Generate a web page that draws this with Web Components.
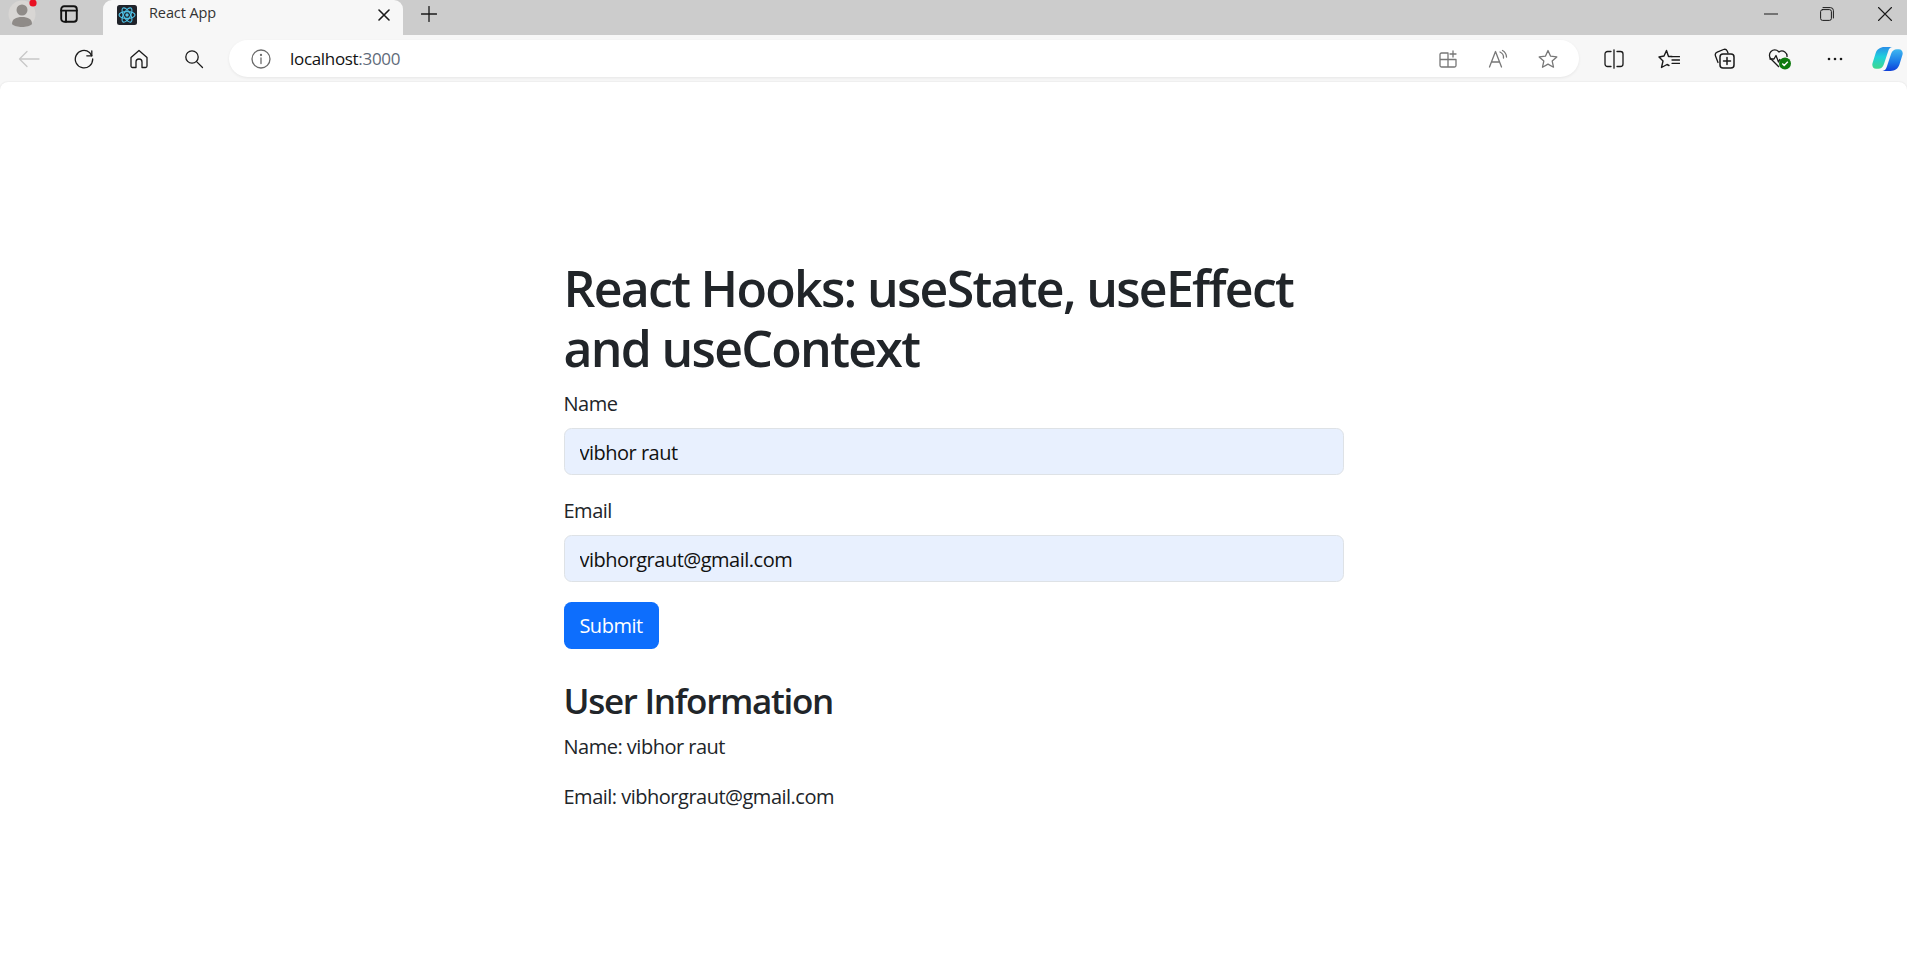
<!DOCTYPE html>
<html><head><meta charset="utf-8"><style>
html,body{margin:0;height:100%;background:#f7f7f7;overflow:hidden}
body{display:flex;flex-direction:column;height:978px}
</style></head><body>
<browser-tabstrip></browser-tabstrip>
<browser-toolbar></browser-toolbar>
<page-view>
  <hooks-form></hooks-form>
</page-view>
<script>
const UI='"Open Sans","Noto Sans",sans-serif';
const ic=(w,h,body,vb)=>`<svg width="${w}" height="${h}" viewBox="${vb||`0 0 ${w} ${h}`}" fill="none" stroke="currentColor" stroke-width="1.3" stroke-linecap="round" stroke-linejoin="round">${body}</svg>`;
const reactLogo=`<svg width="20" height="20" viewBox="0 0 20 20"><rect width="20" height="20" rx="2.5" fill="#20232a"/><g fill="none" stroke="#4fc3e8" stroke-width="1.1"><ellipse cx="10" cy="10" rx="8" ry="3.4"/><ellipse cx="10" cy="10" rx="8" ry="3.4" transform="rotate(60 10 10)"/><ellipse cx="10" cy="10" rx="8" ry="3.4" transform="rotate(120 10 10)"/></g><circle cx="10" cy="10" r="1.7" fill="#4fc3e8"/></svg>`;
class BrowserTabstrip extends HTMLElement{constructor(){super();this.attachShadow({mode:'open'}).innerHTML=`<style>
:host{display:flex;height:35px;background:#cccccc;flex:none;color:#1a1a1a;font:14.5px ${UI}}
.b{display:flex;align-items:center;justify-content:center;height:27px;flex:none}
.tab{width:300px;height:35px;background:#f7f7f7;border-radius:9px 9px 0 0;display:flex;align-items:center;box-sizing:border-box;padding:0 0 6px 14px;margin-left:9px;flex:none}
.t{margin:0 0 4px 12px;flex:1;letter-spacing:-.1px;color:#333}
.x{width:38px;display:flex;justify-content:center}
.sp{flex:1}
</style>
<div class="b" style="width:44px"><svg width="30" height="27" viewBox="7 0 30 27"><circle cx="22" cy="14" r="13.5" fill="#d8d6d4"/><circle cx="22" cy="10" r="5.5" fill="#8f8b88"/><path d="M12 24c0-5 4-7 10-7s10 2 10 7c-3 4-17 4-20 0z" fill="#8f8b88"/><circle cx="33" cy="3" r="3.6" fill="#e81123"/></svg></div>
<div class="b" style="width:50px;color:#111">${ic(18,18,'<rect x="1.2" y="1.2" width="15.6" height="15.6" rx="3" stroke-width="1.9"/><path d="M1.2 5.6H16.8M6 5.6V16.8" stroke-width="1.9"/>')}</div>
<div class="tab">${reactLogo}<span class="t">React App</span><span class="x">${ic(12,12,'<path d="M1 1L11 11M11 1L1 11" stroke-width="1.6"/>')}</span></div>
<div class="b" style="width:52px">${ic(16,16,'<path d="M8 0.5V15.5M0.5 8H15.5"/>')}</div>
<div class="sp"></div>
<div class="b" style="width:56px">${ic(14,2,'<path d="M0 1H14" stroke-width="1"/>')}</div>
<div class="b" style="width:56px;margin-right:8px">${ic(14,14,'<rect x=".6" y="2.6" width="10.8" height="10.8" rx="2" stroke-width="1"/><path d="M3 .6H10.5A3 3 0 0 1 13.4 3.5V11" stroke-width="1"/>')}</div>
<div class="b" style="width:44px">${ic(14,14,'<path d="M.5.5L13.5 13.5M13.5.5L.5 13.5" stroke-width="1.1"/>')}</div>`}}
customElements.define('browser-tabstrip',BrowserTabstrip);

class AddressBar extends HTMLElement{constructor(){super();this.attachShadow({mode:'open'}).innerHTML=`<style>
:host{display:flex;align-items:center;width:1350px;height:37px;flex:none;background:#fff;border-radius:19px;box-shadow:0 1px 3px rgba(0,0,0,.07);color:#6b6b6b;font:17px ${UI}}
.u{flex:1;color:#111;letter-spacing:-.32px}
.u span{color:#5f6b7a}
.i{width:50px;display:flex;justify-content:center;flex:none}
.first{width:39px;padding-left:22px;justify-content:flex-start}
</style>
<span class="i first">${ic(20,20,'<circle cx="10" cy="10" r="9"/><path d="M10 9V14.500"/><circle cx="10" cy="6" r=".5"/>')}</span>
<span class="u">localhost<span>:3000</span></span>
<span class="i">${ic(18,18,'<path d="M9 3H2.500A1.500 1.500 0 0 0 1 4.500V15.500A1.500 1.500 0 0 0 2.500 17H15.500A1.500 1.500 0 0 0 17 15.500V9.500H1M9 3V17" stroke="#777"/><path d="M14 1V7M11 4H17" stroke="#777"/>')}</span>
<span class="i">${ic(20,20,'<path d="M1.500 18L7.500 2.500L13.500 18M3.500 13H11.500" stroke="#777"/><path d="M12 3A6 6 0 0 1 15.500 9M14.500 1.500A8 8 0 0 1 18.500 8" stroke="#777"/>')}</span>
<span class="i" style="margin-right:6px">${ic(20,20,'<path d="M10 1.500L12.600 7.200L18.800 7.900L14.200 12.100L15.500 18.200L10 15.100L4.500 18.200L5.800 12.100L1.200 7.900L7.400 7.200Z" stroke="#777"/>')}</span>`}}
customElements.define('address-bar',AddressBar);

class BrowserToolbar extends HTMLElement{constructor(){super();this.attachShadow({mode:'open'}).innerHTML=`<style>
:host{display:flex;align-items:center;height:47px;flex:none;background:#f7f7f7;color:#1a1a1a}
.b{width:55px;display:flex;align-items:center;justify-content:center;flex:none}
.r{width:55.5px}
address-bar{margin:0 7px 0 8px}
</style>
<span class="b" style="margin-left:1px">${ic(22,18,'<path d="M21 9H1.500M9 1.500L1.500 9L9 16.500" stroke="#c8c8c8"/>')}</span>
<span class="b">${ic(20,20,'<path d="M17.800 1.800V6.800H12.800"/><path d="M18.700 10A8.700 8.700 0 1 1 15.500 3.400L17.800 6.800"/>')}</span>
<span class="b">${ic(20,20,'<path d="M2 8.500L10 1.500L18 8.500V17a1.500 1.500 0 0 1-1.500 1.500H13V13a3 3 0 0 0-6 0V18.500H3.500A1.500 1.500 0 0 1 2 17Z"/>')}</span>
<span class="b">${ic(20,20,'<circle cx="8" cy="8" r="6.200"/><path d="M12.600 12.600L18.500 18.500"/>')}</span>
<address-bar></address-bar>
<span class="b r">${ic(20,20,'<path d="M10 0.800V19.200"/><path d="M7 2.500H3.500A2.500 2.500 0 0 0 1 5V15A2.500 2.500 0 0 0 3.500 17.500H7M13 2.500H16.500A2.500 2.500 0 0 1 19 5V15A2.500 2.500 0 0 1 16.500 17.500H13"/>')}</span>
<span class="b r">${ic(22,20,'<path d="M14 7.500H10.500L8.500 1.500L6 7L1 8L5 12L3.500 18.500L9 15.500L11 16.500" stroke-width="1.400"/><path d="M14 7.700H21.500M14 11H21.500M14 14.300H21.500"/>')}</span>
<span class="b r">${ic(21,21,'<path d="M4 14.500L1.500 8A3 3 0 0 1 3.200 4.200L9.500 1.500A3 3 0 0 1 13.200 3L14 5"/><rect x="6" y="6" width="14" height="14" rx="3" stroke-width="1.500"/><path d="M13 9.500V16.500M9.500 13H16.500" stroke-width="1.500"/>')}</span>
<span class="b r"><svg width="24" height="22" viewBox="0 0 24 22" fill="none" stroke="#1a1a1a" stroke-width="1.300" stroke-linejoin="round"><path d="M11 19L3 11A5.300 5.300 0 0 1 10.500 3.500L11 4L11.500 3.500A5.300 5.300 0 0 1 19 9"/><path d="M1.500 11H6L8 7.500L10.500 14L12 11"/><circle cx="17" cy="15.500" r="6" fill="#0f7b0f" stroke="none"/><path d="M14.300 15.600L16.200 17.500L19.800 13.800" stroke="#fff" stroke-width="1.400"/></svg></span>
<span class="b" style="width:54px"><svg width="16" height="4" viewBox="0 0 16 4" fill="#1a1a1a"><circle cx="2" cy="2" r="1.300"/><circle cx="8" cy="2" r="1.300"/><circle cx="14" cy="2" r="1.300"/></svg></span>
<span class="b" style="width:40px;padding-left:5px"><svg width="31" height="26" viewBox="0 0 30 24" style="flex:none"><defs><linearGradient id="c1" x1="0" y1="0" x2="0" y2="1"><stop offset="0" stop-color="#2a8fe8"/><stop offset=".45" stop-color="#1fd0dc"/><stop offset="1" stop-color="#3fd88c"/></linearGradient><linearGradient id="c2" x1="0" y1="0" x2="0" y2="1"><stop offset="0" stop-color="#3fb8f0"/><stop offset=".6" stop-color="#1a78e8"/><stop offset="1" stop-color="#1040d8"/></linearGradient></defs><path d="M12 .5H20C17.500 .5 16.500 2 15.500 5L11.500 17C10.500 20 8.500 21.500 6 21.500H4C1.200 21.500 -.3 19 .5 16L3.500 6.500C4.700 2.800 8 .5 12 .5Z" fill="url(#c1)"/><path d="M18 23.500H10C12.500 23.500 13.500 22 14.500 19L18.500 7C19.500 4 21.500 2.500 24 2.500H26C28.800 2.500 30.300 5 29.500 8L26.500 17.500C25.300 21.200 22 23.500 18 23.500Z" fill="url(#c2)"/></svg></span>`}}
customElements.define('browser-toolbar',BrowserToolbar);

class PageView extends HTMLElement{constructor(){super();this.attachShadow({mode:'open'}).innerHTML=`<style>
:host{display:block;flex:1;background:#fff;border-radius:8px 8px 0 0;box-shadow:0 0 2px rgba(0,0,0,.12);padding-top:176px;box-sizing:border-box;min-height:0}
</style><slot></slot>`}}
customElements.define('page-view',PageView);

class FieldGroup extends HTMLElement{constructor(){super();this.attachShadow({mode:'open'}).innerHTML=`<style>
:host{display:block;margin-bottom:20px}
label{display:block;height:29px;padding-top:1px;line-height:30px;margin-bottom:10px}
input{display:block;width:100%;box-sizing:border-box;height:47px;border:1px solid #dee2e6;border-radius:7.5px;background:#e8f0fe;padding:1px 15px 0;font:inherit;letter-spacing:inherit;color:#111;outline:none}
</style><label>${this.getAttribute('label')}</label><input value="${this.getAttribute('value')}">`}}
customElements.define('field-group',FieldGroup);

class HooksForm extends HTMLElement{constructor(){super();this.attachShadow({mode:'open'}).innerHTML=`<style>
:host{display:block;width:780px;margin:0 auto;color:#212529;font:20px/30px ${UI};letter-spacing:-.5px}
h1{font-size:50px;line-height:60px;font-weight:600;margin:0 0 10px;letter-spacing:-1.71px}
h3{font-size:35px;line-height:42px;font-weight:600;margin:31px 0 10px;letter-spacing:-1.3px}
p{margin:0 0 20px}
button{display:block;height:47px;width:95px;border:0;border-radius:7.5px;background:#0d6efd;color:#fff;font:inherit;letter-spacing:inherit;padding:0}
</style>
<h1>React Hooks: useState, useEffect and useContext</h1>
<field-group label="Name" value="vibhor raut"></field-group>
<field-group label="Email" value="vibhorgraut@gmail.com"></field-group>
<button>Submit</button>
<h3>User Information</h3>
<p>Name: vibhor raut</p>
<p>Email: vibhorgraut@gmail.com</p>`}}
customElements.define('hooks-form',HooksForm);
</script>
</body></html>
